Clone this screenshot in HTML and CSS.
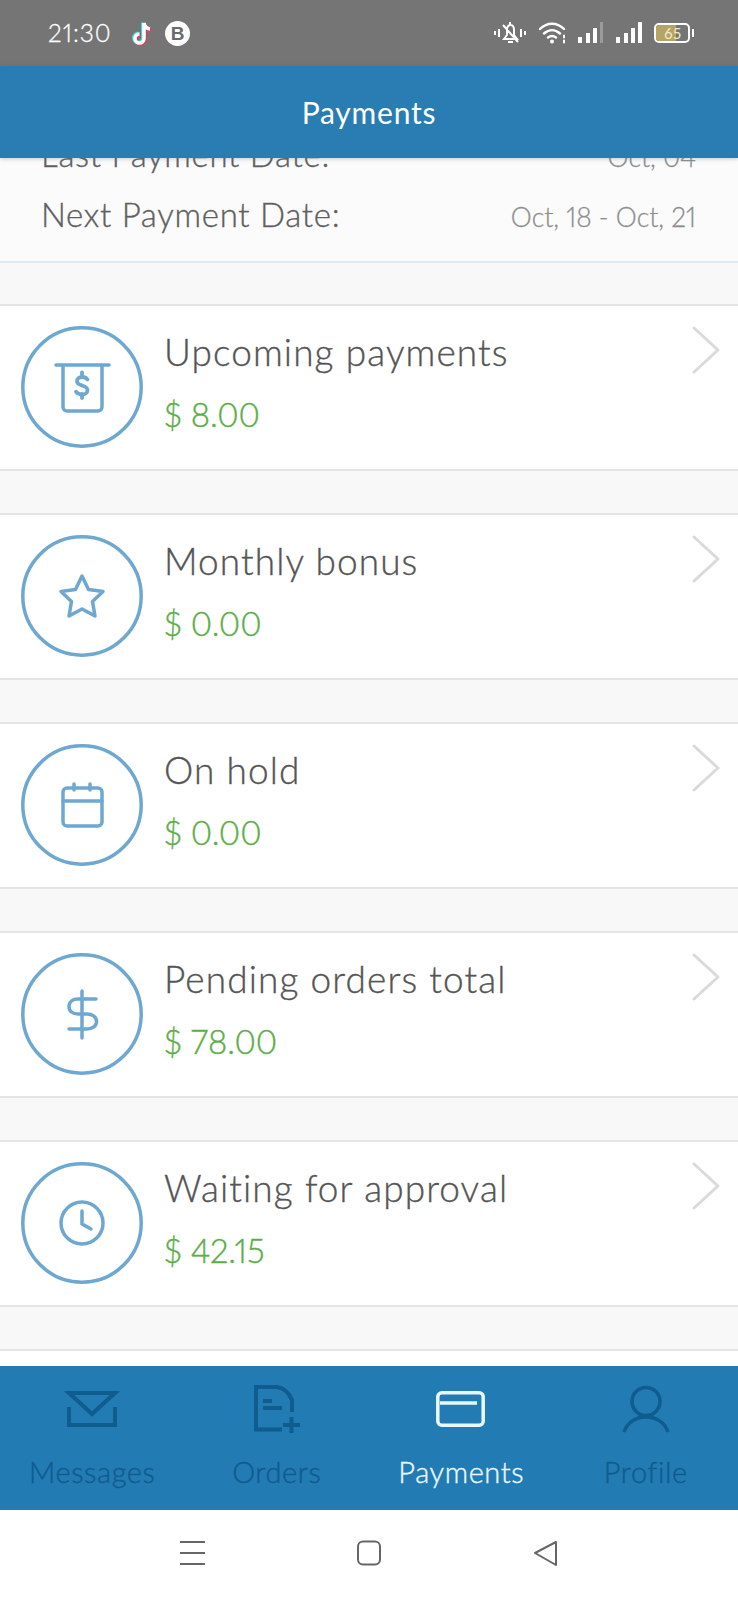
FILE: index.html
```html
<!DOCTYPE html>
<html lang="en">
<head>
<meta charset="utf-8">
<title>Payments</title>
<link rel="stylesheet" href="styles.css">
</head>
<body>
<svg class="defs" width="0" height="0" aria-hidden="true">
  <defs>
    <path id="note" d="M14 3v15.500a4.500 4.500 0 1 1-4.500-4.500M14 3c.5 3.500 2.500 5.500 6 6" fill="none" stroke-width="3.600"/>
    <symbol id="chev" viewBox="0 0 30 50"><path d="M3 3l24 22L3 47" fill="none" stroke="#dadada" stroke-width="3" stroke-linecap="round" stroke-linejoin="round"/></symbol>
  </defs>
</svg>
<div class="status">
  <span class="time">21:30</span>
  <svg class="tiktok" viewBox="0 0 24 26">
    <use href="#note" stroke="#3fdad8" x="-1.200" y="-.6"/>
    <use href="#note" stroke="#e8345a" x="1.200" y=".8"/>
    <use href="#note" stroke="#fff"/>
  </svg>
  <span class="badge">B</span>
  <span class="status-right">
    <svg class="bell" viewBox="0 0 32 24" fill="none" stroke="#fff" stroke-width="2">
      <path d="M1 10v4M5 8v8M27 8v8M31 10v4" stroke-width="2"/>
      <path d="M10 18l3-4V9c0-3 1.500-5 3.500-5S20 6 20 9v5l3 4zM14 21h5M9 4l15 17M16 1v3"/>
    </svg>
    <svg class="wifi" viewBox="0 0 28 22" fill="none" stroke="#fff" stroke-width="2.400" stroke-linecap="round">
      <path d="M1 7c7-7 17-7 24 0M5 11.500c5-4.500 11-4.500 16 0M9 15.500c2.500-2 5.500-2 8 0"/>
      <circle cx="13" cy="19.500" r="2" fill="#fff" stroke="none"/>
      <path d="M25 13.500v2M25 18.500v2" stroke-width="2"/>
    </svg>
    <svg class="bars" viewBox="0 0 26 22" fill="#fff">
      <rect x="0" y="15" width="4" height="6"/><rect x="8" y="11" width="4" height="10"/><rect x="15" y="6" width="4" height="15"/><rect x="22" y="0" width="3" height="21" fill="#9a9a9a"/>
    </svg>
    <svg class="bars" viewBox="0 0 26 22" fill="#fff">
      <rect x="0" y="15" width="4" height="6"/><rect x="8" y="11" width="4" height="10"/><rect x="15" y="6" width="4" height="15"/><rect x="22" y="0" width="4" height="21"/>
    </svg>
    <span class="battery"><span class="level"></span><span class="pct">65</span></span>
  </span>
</div>

<header class="appbar">Payments</header>

<main class="content">
  <section class="dates">
    <div class="date-row"><span class="date-label">Last Payment Date:</span><span class="date-value">Oct, 04</span></div>
    <div class="date-row"><span class="date-label">Next Payment Date:</span><span class="date-value">Oct, 18 - Oct, 21</span></div>
  </section>

  <article class="row">
    <svg class="ring" viewBox="0 0 122 122" fill="none" stroke="#6ea8d1" stroke-width="3.500" stroke-linecap="round" stroke-linejoin="round">
      <circle cx="61" cy="61" r="59.200"/>
      <path d="M35 39h53M42 39v42a4 4 0 0 0 4 4h31a4 4 0 0 0 4-4V39"/>
      <path d="M66.500 53.500c-1-1.500-3-2.500-5.500-2.500-3 0-5 1.700-5 4s2 3.500 5 4.500 5.500 2 5.500 4.500-2.500 4.500-5.500 4.500-5-1-6-2.800M61 46.500v4M61 68v4" stroke-width="3.800"/>
    </svg>
    <div class="info"><h2 class="title">Upcoming payments</h2><p class="amount">$ 8.00</p></div>
    <svg class="chev"><use href="#chev"/></svg>
  </article>

  <article class="row">
    <svg class="ring" viewBox="0 0 122 122" fill="none" stroke="#6ea8d1" stroke-width="3.500" stroke-linecap="round" stroke-linejoin="round">
      <circle cx="61" cy="61" r="59.200"/>
      <path d="M61 41l6.500 13.500 14.500 2-10.500 10 2.500 14.500-13-7-13 7 2.500-14.500L40 56.500l14.500-2z"/>
    </svg>
    <div class="info"><h2 class="title">Monthly bonus</h2><p class="amount">$ 0.00</p></div>
    <svg class="chev"><use href="#chev"/></svg>
  </article>

  <article class="row">
    <svg class="ring" viewBox="0 0 122 122" fill="none" stroke="#6ea8d1" stroke-width="3.500" stroke-linecap="round" stroke-linejoin="round">
      <circle cx="61" cy="61" r="59.200"/>
      <rect x="42" y="44" width="39" height="38" rx="4"/>
      <path d="M42 57h39M53 40v6M69 40v6"/>
    </svg>
    <div class="info"><h2 class="title">On hold</h2><p class="amount">$ 0.00</p></div>
    <svg class="chev"><use href="#chev"/></svg>
  </article>

  <article class="row">
    <svg class="ring" viewBox="0 0 122 122" fill="none" stroke="#6ea8d1" stroke-width="3.500" stroke-linecap="round" stroke-linejoin="round">
      <circle cx="61" cy="61" r="59.200"/>
      <path d="M75 46H57c-5.500 0-9 3-9 7.500s3.500 7.500 9 7.500h9c5.500 0 9.500 3 9.500 7.500S71.500 76 66 76H48M61 38v47"/>
    </svg>
    <div class="info"><h2 class="title">Pending orders total</h2><p class="amount">$ 78.00</p></div>
    <svg class="chev"><use href="#chev"/></svg>
  </article>

  <article class="row">
    <svg class="ring" viewBox="0 0 122 122" fill="none" stroke="#6ea8d1" stroke-width="3.500" stroke-linecap="round" stroke-linejoin="round">
      <circle cx="61" cy="61" r="59.200"/>
      <circle cx="61" cy="61" r="21"/>
      <path d="M61 49v13l9 5"/>
    </svg>
    <div class="info"><h2 class="title">Waiting for approval</h2><p class="amount">$ 42.15</p></div>
    <svg class="chev"><use href="#chev"/></svg>
  </article>

  <div class="row row-cut"></div>
</main>

<nav class="tabs">
  <a class="tab">
    <svg class="tab-icon" viewBox="0 0 60 52" fill="none" stroke="#0f5c8e" stroke-width="4">
      <path d="M7 8h46L30 29zM7 22v18h46V22"/>
    </svg>
    <span>Messages</span>
  </a>
  <a class="tab">
    <svg class="tab-icon" viewBox="0 0 60 52" fill="none" stroke="#0f5c8e" stroke-width="4">
      <path d="M45 27V15C42 8 37 3 30 2H9v42.500h26M16 16h9M16 23h19M36 40h17M44.500 32v16"/>
    </svg>
    <span>Orders</span>
  </a>
  <a class="tab tab-active">
    <svg class="tab-icon" viewBox="0 0 60 52" fill="none" stroke="#e9f8ff" stroke-width="3.500" stroke-linejoin="round">
      <rect x="6.800" y="7.800" width="45.400" height="32.400" rx="4"/>
      <path d="M9 18h37"/>
    </svg>
    <span>Payments</span>
  </a>
  <a class="tab">
    <svg class="tab-icon" viewBox="0 0 60 52" fill="none" stroke="#0f5c8e" stroke-width="3.500">
      <circle cx="30" cy="16.500" r="14"/>
      <path d="M8 47c3-9 11-15 22-15s19 6 22 15"/>
    </svg>
    <span>Profile</span>
  </a>
</nav>

<footer class="sysnav">
  <svg class="sys" viewBox="0 0 26 26" fill="none" stroke="#666" stroke-width="2"><path d="M0 2h25M0 13h25M0 24h25"/></svg>
  <svg class="sys" viewBox="0 0 26 26" fill="none" stroke="#666" stroke-width="2"><rect x="1" y="1.500" width="22" height="23" rx="5"/></svg>
  <svg class="sys" viewBox="0 0 26 26" fill="none" stroke="#666" stroke-width="2" stroke-linejoin="round"><path d="M1 13L22 2v23z"/></svg>
</footer>
</body>
</html>
```

FILE: styles.css
```css
* { box-sizing: border-box; }
html, body { margin: 0; padding: 0; }
body {
  width: 738px;
  height: 1600px;
  display: flex;
  flex-direction: column;
  overflow: hidden;
  background: #fff;
  font-family: Lato, "Open Sans", sans-serif;
  color: #5f5f5f;
}
.defs { position: absolute; }

.status {
  height: 66px;
  flex: none;
  background: #757575;
  display: flex;
  align-items: center;
  padding: 0 48px 0 48px;
  color: #fff;
}
.time { font-size: 24.500px; line-height: 1; width: 82px; font-weight: 300; letter-spacing: 1px; font-variant-numeric: proportional-nums; -webkit-text-stroke: .3px #fff; }
.tiktok { width: 24px; height: 26px; }
.badge {
  width: 25px;
  height: 25px;
  margin-left: 11px;
  border-radius: 50%;
  background: #fff;
  color: #6a6a6a;
  font: bold 19px/25px "Liberation Sans", sans-serif;
  text-align: center;
}
.status-right { margin-left: auto; display: flex; align-items: center; }
.bell { width: 32px; height: 24px; margin-right: 13px; }
.wifi { width: 28px; height: 22px; margin-right: 11px; }
.bars { width: 26px; height: 22px; margin-right: 12px; }
.battery {
  position: relative;
  width: 36px;
  height: 20px;
  border: 2px solid #fff;
  border-radius: 5px;
  overflow: visible;
}
.battery::after {
  content: "";
  position: absolute;
  right: -6px;
  top: 4px;
  width: 2px;
  height: 8px;
  background: #fff;
}
.level { position: absolute; left: 0; top: 0; bottom: 0; width: 62%; background: #b5a466; border-radius: 3px 0 0 3px; }
.pct { position: absolute; left: 8px; top: 0; font-size: 15px; line-height: 16px; color: #f1eac9; }

.appbar {
  height: 92px;
  flex: none;
  position: relative;
  z-index: 2;
  background: #2a7db3;
  color: #fff;
  font-size: 30px;
  letter-spacing: .8px;
  line-height: 92px;
  text-align: center;
  box-shadow: 0 1px 4px rgba(40, 110, 150, .3);
}

.content {
  flex: 1;
  min-height: 0;
  overflow: hidden;
  background: #f8f8f8;
}
.dates {
  margin-top: -34px;
  background: #fbfbfb;
  border-bottom: 2px solid #dcebf3;
  padding: 0 42px 17px 41px;
}
.dates + .row { margin-top: 41px; }
.date-row {
  height: 60px;
  display: flex;
  align-items: center;
  justify-content: space-between;
}
.date-label { font-size: 33px; font-weight: 300; letter-spacing: .7px; -webkit-text-stroke: .35px #5f5f5f; }
.date-value { font-size: 26.500px; color: #8e8e8e; font-weight: 300; position: relative; top: 3px; font-variant-numeric: proportional-nums; -webkit-text-stroke: .3px #8e8e8e; }

.row {
  height: 167px;
  margin-top: 42px;
  background: #fff;
  border-top: 2px solid #e4e4e4;
  border-bottom: 2px solid #e4e4e4;
  padding: 20px 21px 0;
  display: flex;
  align-items: flex-start;
}
.row-cut { border-bottom: 0; }
.ring { width: 122px; height: 122px; flex: none; }
.info { margin-left: 21px; flex: 1; }
.title { margin: 4px 0 0; font-size: 37px; line-height: 44px; font-weight: 300; letter-spacing: 1.100px; color: #555; -webkit-text-stroke: .35px #555; }
.amount { margin: 20px 0 0; font-size: 33px; line-height: 40px; font-weight: 300; color: #5bae46; font-variant-numeric: proportional-nums; -webkit-text-stroke: .4px #5bae46; }
.chev { width: 30px; height: 50px; margin: -1px -4px 0 -2px; flex: none; }

.tabs {
  height: 144px;
  flex: none;
  background: #237bb4;
  display: grid;
  grid-template-columns: repeat(4, 1fr);
}
.tab {
  display: flex;
  flex-direction: column;
  align-items: center;
  padding-top: 19px;
  font-size: 29px;
  font-weight: 300;
  letter-spacing: .6px;
  line-height: 36px;
  color: #0f5c8e;
  -webkit-text-stroke: .4px currentColor;
}
.tab-icon { width: 60px; height: 52px; }
.tab span { margin-top: 17px; }
.tab-active { color: #e9f8ff; }

.sysnav {
  height: 90px;
  flex: none;
  background: #fff;
  display: flex;
  align-items: flex-start;
  padding: 30px 0 0 180px;
  gap: 151px;
}
.sys { width: 26px; height: 26px; }
```
